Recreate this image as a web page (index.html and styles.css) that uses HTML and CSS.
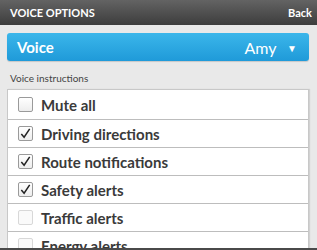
FILE: index.html
```html
<!DOCTYPE html>
<html lang="en">
<head>
    <meta charset="UTF-8">
    <meta name="viewport" content="width=device-width, initial-scale=1.0">
    <title>Voice Options</title>
    <link rel="stylesheet" href="styles.css">
</head>
<body>
    <div class="header">
        <span class="title">VOICE OPTIONS</span>
        <span class="back">Back</span>
    </div>
    <div class="content">
        <div class="voice-select">
            <span class="voice-label">Voice</span>
            <span class="voice-value">Amy <span class="arrow">&#9660;</span></span>
        </div>
        <div class="section-label">Voice instructions</div>
        <ul class="options">
            <li class="option first"><span class="box"></span>Mute all</li>
            <li class="option"><span class="box"><svg viewBox="0 0 14 14"><path d="M2.5 7.5 L5.5 11 L11.5 2"/></svg></span>Driving directions</li>
            <li class="option"><span class="box"><svg viewBox="0 0 14 14"><path d="M2.5 7.5 L5.5 11 L11.5 2"/></svg></span>Route notifications</li>
            <li class="option"><span class="box"><svg viewBox="0 0 14 14"><path d="M2.5 7.5 L5.5 11 L11.5 2"/></svg></span>Safety alerts</li>
            <li class="option"><span class="box faint"></span>Traffic alerts</li>
            <li class="option"><span class="box faint"></span>Energy alerts</li>
        </ul>
    </div>
    <div class="footer"></div>
</body>
</html>
```

FILE: styles.css
```css
body {
  margin: 0;
  width: 317px;
  height: 250px;
  overflow: hidden;
  background: #e9e9e9;
  font-family: Lato, "Open Sans", sans-serif;
  position: relative;
}

.header {
  height: 25px;
  background: linear-gradient(#636363, #3d3d3d);
  display: flex;
  align-items: center;
  justify-content: space-between;
  padding: 0 5px 0 10px;
  color: #fff;
  font-size: 11px;
  font-weight: bold;
}

.content {
  padding: 8px 8px 0 7px;
}

.voice-select {
  height: 28px;
  border-radius: 3px;
  background: linear-gradient(#3bb6ea, #1f9ad9);
  display: flex;
  align-items: center;
  justify-content: space-between;
  padding: 0 12px 0 10px;
  color: #fff;
  box-shadow: 0 1px 1px rgba(0, 0, 0, 0.15);
}

.voice-label {
  font-size: 15px;
  font-weight: bold;
}

.voice-value {
  font-size: 16px;
}

.arrow {
  font-size: 10px;
  margin-left: 7px;
  vertical-align: 2px;
}

.section-label {
  font-size: 10px;
  color: #444;
  margin: 11px 0 0 3px;
  height: 17px;
}

.options {
  list-style: none;
  margin: 0;
  padding: 0;
  background: #fff;
  border: 1px solid #c8c8c8;
  border-bottom: none;
  box-shadow: 1px 0 1px rgba(0, 0, 0, 0.1);
}

.option {
  height: 27px;
  border-bottom: 1px solid #bdbdbd;
  display: flex;
  align-items: center;
  padding-left: 10px;
  font-size: 15px;
  font-weight: bold;
  color: #3a3a3a;
}

.option.first {
  height: 29px;
}

.box {
  width: 13px;
  height: 13px;
  border: 1px solid #9a9a9a;
  border-radius: 2px;
  margin-right: 8px;
  display: flex;
  background: linear-gradient(#fff, #ededed);
}

.box svg {
  width: 13px;
  height: 13px;
  fill: none;
  stroke: #222;
  stroke-width: 1.6;
}

.box.faint {
  border-color: #d8d8d8;
  background: #fafafa;
}

.footer {
  position: absolute;
  left: 0;
  right: 0;
  bottom: 0;
  height: 2px;
  background: #4a4a4a;
}
```
